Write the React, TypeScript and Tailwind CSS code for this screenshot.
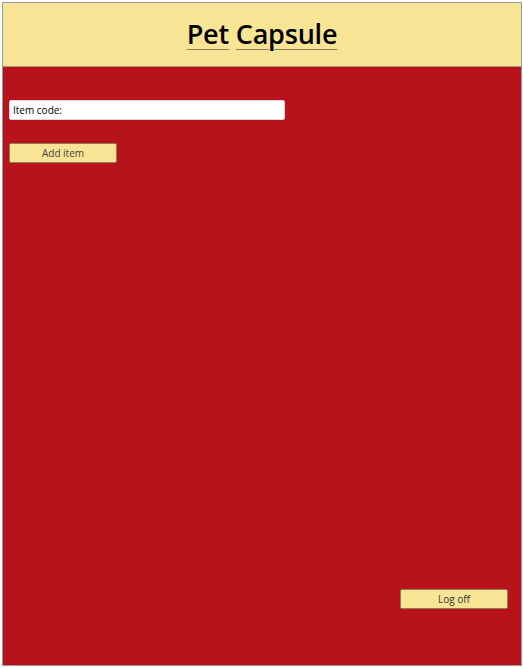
export default function App() {
  return (
    <div className="w-[523px] h-[668px] bg-white pl-[2px] pt-[2px]">
      <div
        className="w-[520px] h-[664px] border border-[#9a9a9a] bg-[#b8121b] flex flex-col"
        style={{ fontFamily: '"Open Sans", "DejaVu Sans", sans-serif' }}
      >
        <header className="h-[64px] bg-[#f7e495] border-b border-[#a89a6a] flex items-center justify-center">
          <h1 className="text-[27px] leading-none text-black font-semibold tracking-[-0.2px] -mt-[2px]">
            <span className="underline decoration-[#8a8060] decoration-1 underline-offset-[5px]">Pet</span>{" "}
            <span className="underline decoration-[#8a8060] decoration-1 underline-offset-[5px]">Capsule</span>
          </h1>
        </header>

        <main className="flex-1 flex flex-col px-[6px] pt-[33px] pb-[56px]">
          <div className="w-[276px] h-[20px] bg-white rounded-[2px] border border-[#d8d8d8] flex items-center px-[3px] text-[10px] text-black">
            Item code:
          </div>
          <button className="mt-[23px] w-[108px] h-[20px] bg-[#f7e495] border border-[#8a7f5a] rounded-[2px] text-[10px] text-[#444] leading-none">
            Add item
          </button>

          <div className="flex-1" />

          <div className="flex justify-end pr-[7px]">
            <button className="w-[108px] h-[20px] bg-[#f7e495] border border-[#8a7f5a] rounded-[2px] text-[10px] text-[#333] leading-none">
              Log off
            </button>
          </div>
        </main>
      </div>
    </div>
  );
}
